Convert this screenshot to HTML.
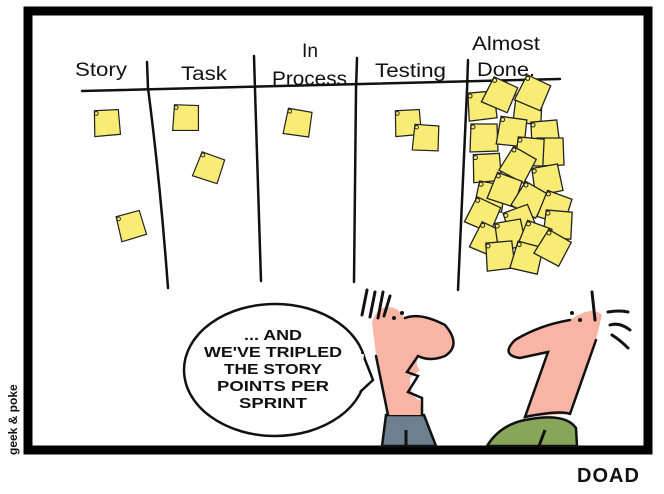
<!DOCTYPE html>
<html><head><meta charset="utf-8"><style>
html,body{margin:0;padding:0;background:#fff;width:664px;height:494px;overflow:hidden}
svg{display:block}
text{font-family:"Liberation Sans",sans-serif}
</style></head><body>
<svg width="664" height="494" viewBox="0 0 664 494" xmlns="http://www.w3.org/2000/svg">
<defs>
<g id="n"><path d="M-13,-14 L13,-14 L14,13 L-14,14 Z" fill="#f8ec74" stroke="#222" stroke-width="1.3"/><circle cx="-11" cy="-11" r="2" fill="none" stroke="#222" stroke-width="1"/></g>
</defs>
<rect x="0" y="0" width="664" height="494" fill="#fff"/>
<rect x="28" y="11" width="620" height="439" fill="#fff" stroke="#000" stroke-width="9"/>
<g font-size="19" fill="#111">
<text x="75" y="76" textLength="52" lengthAdjust="spacingAndGlyphs">Story</text>
<text x="181" y="80" textLength="46" lengthAdjust="spacingAndGlyphs">Task</text>
<text x="302" y="57" textLength="16" lengthAdjust="spacingAndGlyphs">In</text>
<text x="272" y="85" textLength="75" lengthAdjust="spacingAndGlyphs">Process</text>
<text x="375" y="77" textLength="71" lengthAdjust="spacingAndGlyphs">Testing</text>
<text x="472" y="50" textLength="68" lengthAdjust="spacingAndGlyphs">Almost</text>
<text x="477" y="76" textLength="58" lengthAdjust="spacingAndGlyphs">Done.</text>
</g>
<g stroke="#111" stroke-width="2.5" fill="none" stroke-linecap="round">
<path d="M82,91 Q300,86 560,79"/>
<path d="M147,62 L148,88 Q160,180 168,288"/>
<path d="M254,56 L255,90 L261,281"/>
<path d="M357,58 L356,90 L354,282"/>
<path d="M468,60 L467,90 L458,290"/>
</g>
<use href="#n" transform="translate(107,123) rotate(-3) scale(.92)"/>
<use href="#n" transform="translate(186,118) rotate(2) scale(.92)"/>
<use href="#n" transform="translate(209,168) rotate(20) scale(.92)"/>
<use href="#n" transform="translate(131,226) rotate(-15) scale(.92)"/>
<use href="#n" transform="translate(298,123) rotate(10) scale(.92)"/>
<use href="#n" transform="translate(408,123) rotate(-3) scale(.92)"/>
<use href="#n" transform="translate(426,138) rotate(4) scale(.92)"/>
<g>
<use href="#n" transform="translate(482,106) rotate(-5)"/>
<use href="#n" transform="translate(528,110) rotate(5)"/>
<use href="#n" transform="translate(500,95) rotate(25)"/>
<use href="#n" transform="translate(533,93) rotate(25)"/>
<use href="#n" transform="translate(545,135) rotate(-5)"/>
<use href="#n" transform="translate(484,138) rotate(0)"/>
<use href="#n" transform="translate(512,132) rotate(8)"/>
<use href="#n" transform="translate(550,152) rotate(0)"/>
<use href="#n" transform="translate(530,152) rotate(5)"/>
<use href="#n" transform="translate(487,168) rotate(-3)"/>
<use href="#n" transform="translate(518,165) rotate(30)"/>
<use href="#n" transform="translate(547,180) rotate(-10)"/>
<use href="#n" transform="translate(490,197) rotate(10)"/>
<use href="#n" transform="translate(505,190) rotate(20)"/>
<use href="#n" transform="translate(530,200) rotate(30)"/>
<use href="#n" transform="translate(555,208) rotate(20)"/>
<use href="#n" transform="translate(483,215) rotate(25)"/>
<use href="#n" transform="translate(520,222) rotate(-20)"/>
<use href="#n" transform="translate(558,225) rotate(5)"/>
<use href="#n" transform="translate(488,240) rotate(25)"/>
<use href="#n" transform="translate(510,235) rotate(-10)"/>
<use href="#n" transform="translate(535,238) rotate(20)"/>
<use href="#n" transform="translate(500,256) rotate(-5)"/>
<use href="#n" transform="translate(527,258) rotate(15)"/>
<use href="#n" transform="translate(553,248) rotate(30)"/>
</g>
<ellipse cx="275" cy="370" rx="91" ry="66" fill="#fff" stroke="#111" stroke-width="2.5"/>
<path d="M362,352 L373,380 L360,392" fill="#fff" stroke="#111" stroke-width="2.5"/>
<path d="M362,354 L358,390" stroke="#fff" stroke-width="4"/>
<g font-size="15" fill="#111" text-anchor="middle" font-weight="bold">
<text x="273" y="340" textLength="58" lengthAdjust="spacingAndGlyphs">... AND</text>
<text x="273" y="357" textLength="138" lengthAdjust="spacingAndGlyphs">WE'VE TRIPLED</text>
<text x="273" y="374" textLength="98" lengthAdjust="spacingAndGlyphs">THE STORY</text>
<text x="273" y="391" textLength="112" lengthAdjust="spacingAndGlyphs">POINTS PER</text>
<text x="273" y="408" textLength="68" lengthAdjust="spacingAndGlyphs">SPRINT</text>
</g>
<path d="M382,446 L386,415 L424,415 L436,446 Z" fill="#6d8090" stroke="#111" stroke-width="2.5"/>
<line x1="406" y1="430" x2="406" y2="446" stroke="#111" stroke-width="3"/>
<path d="M372,322 Q380,300 398,310 L405,318 Q420,312 445,325 Q462,345 445,356 Q430,362 418,356 Q415,365 420,370 L410,378 Q410,398 420,400 L422,415 L388,415 L376,355 Z" fill="#f8b4a4"/>
<path d="M376,356 L388,415 M418,356 Q430,362 445,356 Q462,345 445,325 Q420,312 405,318 M418,356 L407,372 L418,376 L408,392 L422,398 L422,415" fill="none" stroke="#111" stroke-width="2.5" stroke-linecap="round"/>
<g stroke="#111" stroke-width="3" stroke-linecap="round"><line x1="367" y1="290" x2="362" y2="315"/><line x1="375" y1="292" x2="370" y2="317"/><line x1="383" y1="292" x2="378" y2="318"/><line x1="390" y1="296" x2="384" y2="316"/></g>
<circle cx="394" cy="318" r="2" fill="#111"/><circle cx="402" cy="313" r="2" fill="#111"/>
<path d="M487,446 Q500,425 525,420 Q565,412 576,428 L577,446 Z" fill="#88a65a" stroke="#111" stroke-width="2.5"/>
<line x1="545" y1="430" x2="539" y2="446" stroke="#111" stroke-width="3"/>
<path d="M602,315 Q592,305 570,320 Q540,325 515,340 Q500,355 520,358 L548,352 L525,417 L570,414 L596,340 Z" fill="#f8b4a4"/>
<path d="M570,320 Q540,325 515,340 Q500,355 520,358 L548,352 L525,417 Q560,410 570,414 M570,414 L596,340" fill="none" stroke="#111" stroke-width="2.5" stroke-linecap="round"/>
<g stroke="#111" stroke-width="3" stroke-linecap="round" fill="none"><line x1="592" y1="292" x2="595" y2="320"/><path d="M608,312 Q620,310 628,312"/><path d="M610,325 Q620,322 630,330"/><path d="M612,335 Q620,340 628,348"/></g>
<circle cx="572" cy="313" r="2" fill="#111"/><circle cx="580" cy="320" r="2" fill="#111"/>
<text transform="translate(17,455) rotate(-90)" font-size="12" font-weight="bold" fill="#111">geek &amp; poke</text>
<text x="577" y="482" font-size="20" font-weight="bold" fill="#111" letter-spacing="1">DOAD</text>
</svg>
</body></html>
